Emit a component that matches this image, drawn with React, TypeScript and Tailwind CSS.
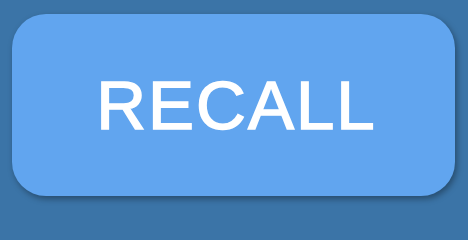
import React from "react";

export default function App() {
  return (
    <div className="w-full min-h-screen bg-[#3b74a7]">
      <div className="w-[468px] h-[210px] flex flex-col pt-[14px] pl-[12px]">
        <button
          className="w-[443px] h-[182px] rounded-[34px] bg-[#61a5ef] shadow-[2px_3px_6px_rgba(0,0,0,0.35)] flex items-center justify-center text-white text-[69px] leading-none tracking-[2px] pl-[6px] [-webkit-text-stroke:1.5px_white]"
          style={{ fontFamily: '"Liberation Sans", Arial, sans-serif' }}
        >
          RECALL
        </button>
      </div>
    </div>
  );
}
